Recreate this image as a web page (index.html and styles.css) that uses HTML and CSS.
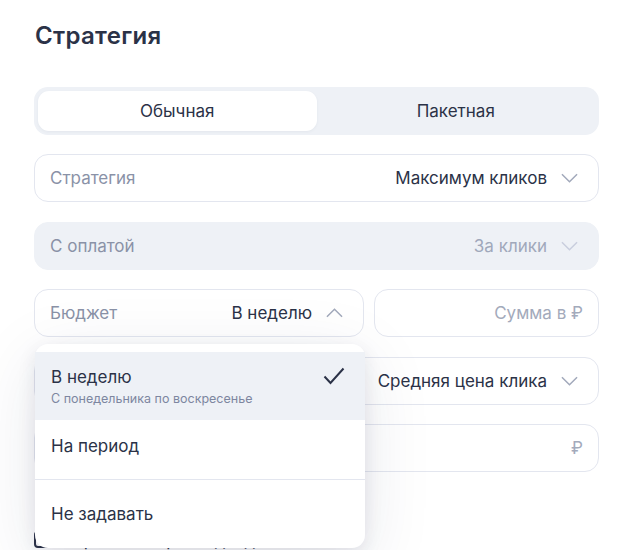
FILE: index.html
```html
<!DOCTYPE html>
<html lang="ru">
<head>
    <meta charset="UTF-8">
    <title>Стратегия</title>
    <link rel="stylesheet" href="styles.css">
</head>
<body>
    <div class="strategy">
        <h2 class="strategy-title">Стратегия</h2>

        <div class="tabs">
            <button class="tab tab-active">Обычная</button>
            <button class="tab">Пакетная</button>
        </div>

        <div class="field">
            <span class="field-label">Стратегия</span>
            <span class="field-value">Максимум кликов</span>
            <svg class="chevron" viewBox="0 0 18 10"><path d="M1 1l8 8 8-8"/></svg>
        </div>

        <div class="field field-disabled">
            <span class="field-label">С оплатой</span>
            <span class="field-value">За клики</span>
            <svg class="chevron" viewBox="0 0 18 10"><path d="M1 1l8 8 8-8"/></svg>
        </div>

        <div class="field-row">
            <div class="budget">
                <div class="field field-open">
                    <span class="field-label">Бюджет</span>
                    <span class="field-value">В неделю</span>
                    <svg class="chevron" viewBox="0 0 18 10"><path d="M1 9l8-8 8 8"/></svg>
                </div>
                <!-- open menu -->
                <div class="dropdown">
                    <div class="option option-selected">
                        <div class="option-text">
                            <span class="option-title">В неделю</span>
                            <span class="option-hint">С понедельника по воскресенье</span>
                        </div>
                        <svg class="check" viewBox="0 0 22 18"><path d="M1.5 9.5l6 6.5L20.5 1.5"/></svg>
                    </div>
                    <div class="option">
                        <span class="option-title">На период</span>
                    </div>
                    <div class="separator"></div>
                    <div class="option">
                        <span class="option-title">Не задавать</span>
                    </div>
                </div>
            </div>
            <div class="field field-input">
                <span class="field-placeholder">Сумма в ₽</span>
            </div>
        </div>

        <div class="field">
            <span class="field-label"></span>
            <span class="field-value">Средняя цена клика</span>
            <svg class="chevron" viewBox="0 0 18 10"><path d="M1 1l8 8 8-8"/></svg>
        </div>

        <div class="field field-input">
            <span class="field-placeholder">₽</span>
        </div>

        <label class="checkbox">
            <span class="checkbox-box"></span>
            <span class="checkbox-text">Ограничить расход в день</span>
            <span class="info">?</span>
        </label>
    </div>
</body>
</html>
```

FILE: styles.css
```css
body {
    margin: 0;
    background: #fff;
    font-family: 'Inter', 'Noto Sans', Arial, sans-serif;
    color: #2b3247;
    overflow: hidden;
}

.strategy {
    width: 565px;
    padding: 21px 0 0 34px;
    display: flex;
    flex-direction: column;
}

.strategy-title {
    margin: 0 0 37px 1px;
    font-size: 24px;
    line-height: 29px;
    font-weight: 600;
    letter-spacing: 0.3px;
    color: #2b3247;
}

.tabs {
    display: flex;
    height: 48px;
    padding: 4px;
    box-sizing: border-box;
    background: #eef1f6;
    border-radius: 14px;
    margin-bottom: 19px;
}

.tab {
    flex: 1;
    border: none;
    background: transparent;
    border-radius: 11px;
    font-family: inherit;
    font-size: 17px;
    color: #2b3247;
    cursor: pointer;
}

.tab-active {
    background: #fff;
    box-shadow: 0 1px 3px rgba(40, 50, 80, 0.05);
}

.field {
    height: 48px;
    box-sizing: border-box;
    border: 1px solid #e3e6ef;
    border-radius: 14px;
    background: #fff;
    display: flex;
    align-items: center;
    padding: 0 20px 0 15px;
    margin-bottom: 19.5px;
    font-size: 17px;
}

.field-label {
    color: #8a92a7;
    flex: 1;
}

.field-value {
    color: #2b3247;
}

.chevron {
    width: 17px;
    height: 10px;
    margin-left: 14px;
    fill: none;
    stroke: #a2a9bb;
    stroke-width: 1.6;
}

.field-disabled {
    background: #eef1f6;
    border-color: #eef1f6;
}

.field-disabled .field-value {
    color: #a0a8bb;
}

.field-disabled .chevron {
    stroke: #c9cede;
}

.field-row {
    display: flex;
    gap: 10px;
}

.budget {
    position: relative;
    width: 330px;
}

.field-row .field-input {
    flex: 1;
}

.field-input {
    justify-content: flex-end;
    padding-right: 15px;
}

.field-placeholder {
    color: #a3aabb;
}

.dropdown {
    position: absolute;
    top: 55px;
    left: 1px;
    right: -1px;
    z-index: 2;
    background: #fff;
    border-radius: 13px;
    padding: 8px 0;
    box-shadow: 0 6px 18px rgba(30, 40, 80, 0.1), 0 16px 70px rgba(30, 40, 80, 0.1);
}

.option {
    display: flex;
    align-items: center;
    height: 52px;
    padding: 0 16px;
    font-size: 17px;
}

.option-selected {
    height: 68px;
    background: #eef1f6;
    align-items: flex-start;
    padding-top: 15px;
    box-sizing: border-box;
}

.separator {
    height: 1px;
    margin: 7px 0 8px;
    background: #e3e6ef;
}

.option-text {
    flex: 1;
    display: flex;
    flex-direction: column;
}

.option-title {
    line-height: 21px;
    color: #2b3247;
}

.option-hint {
    font-size: 12.5px;
    line-height: 18px;
    color: #7d86a0;
    margin-top: 2px;
}

.check {
    width: 22px;
    height: 18px;
    margin: 0 4px 0 0;
    fill: none;
    stroke: #2b3247;
    stroke-width: 2;
}

.checkbox {
    display: flex;
    align-items: center;
    gap: 12px;
    margin-top: 38px;
    font-size: 17px;
}

.checkbox-box {
    width: 17px;
    height: 17px;
    border: 2px solid #2b3247;
    border-radius: 4px;
    box-sizing: border-box;
}

.info {
    width: 16px;
    height: 16px;
    border-radius: 50%;
    background: #c7ccd9;
    color: #fff;
    font-size: 11px;
    text-align: center;
    line-height: 16px;
}
```
